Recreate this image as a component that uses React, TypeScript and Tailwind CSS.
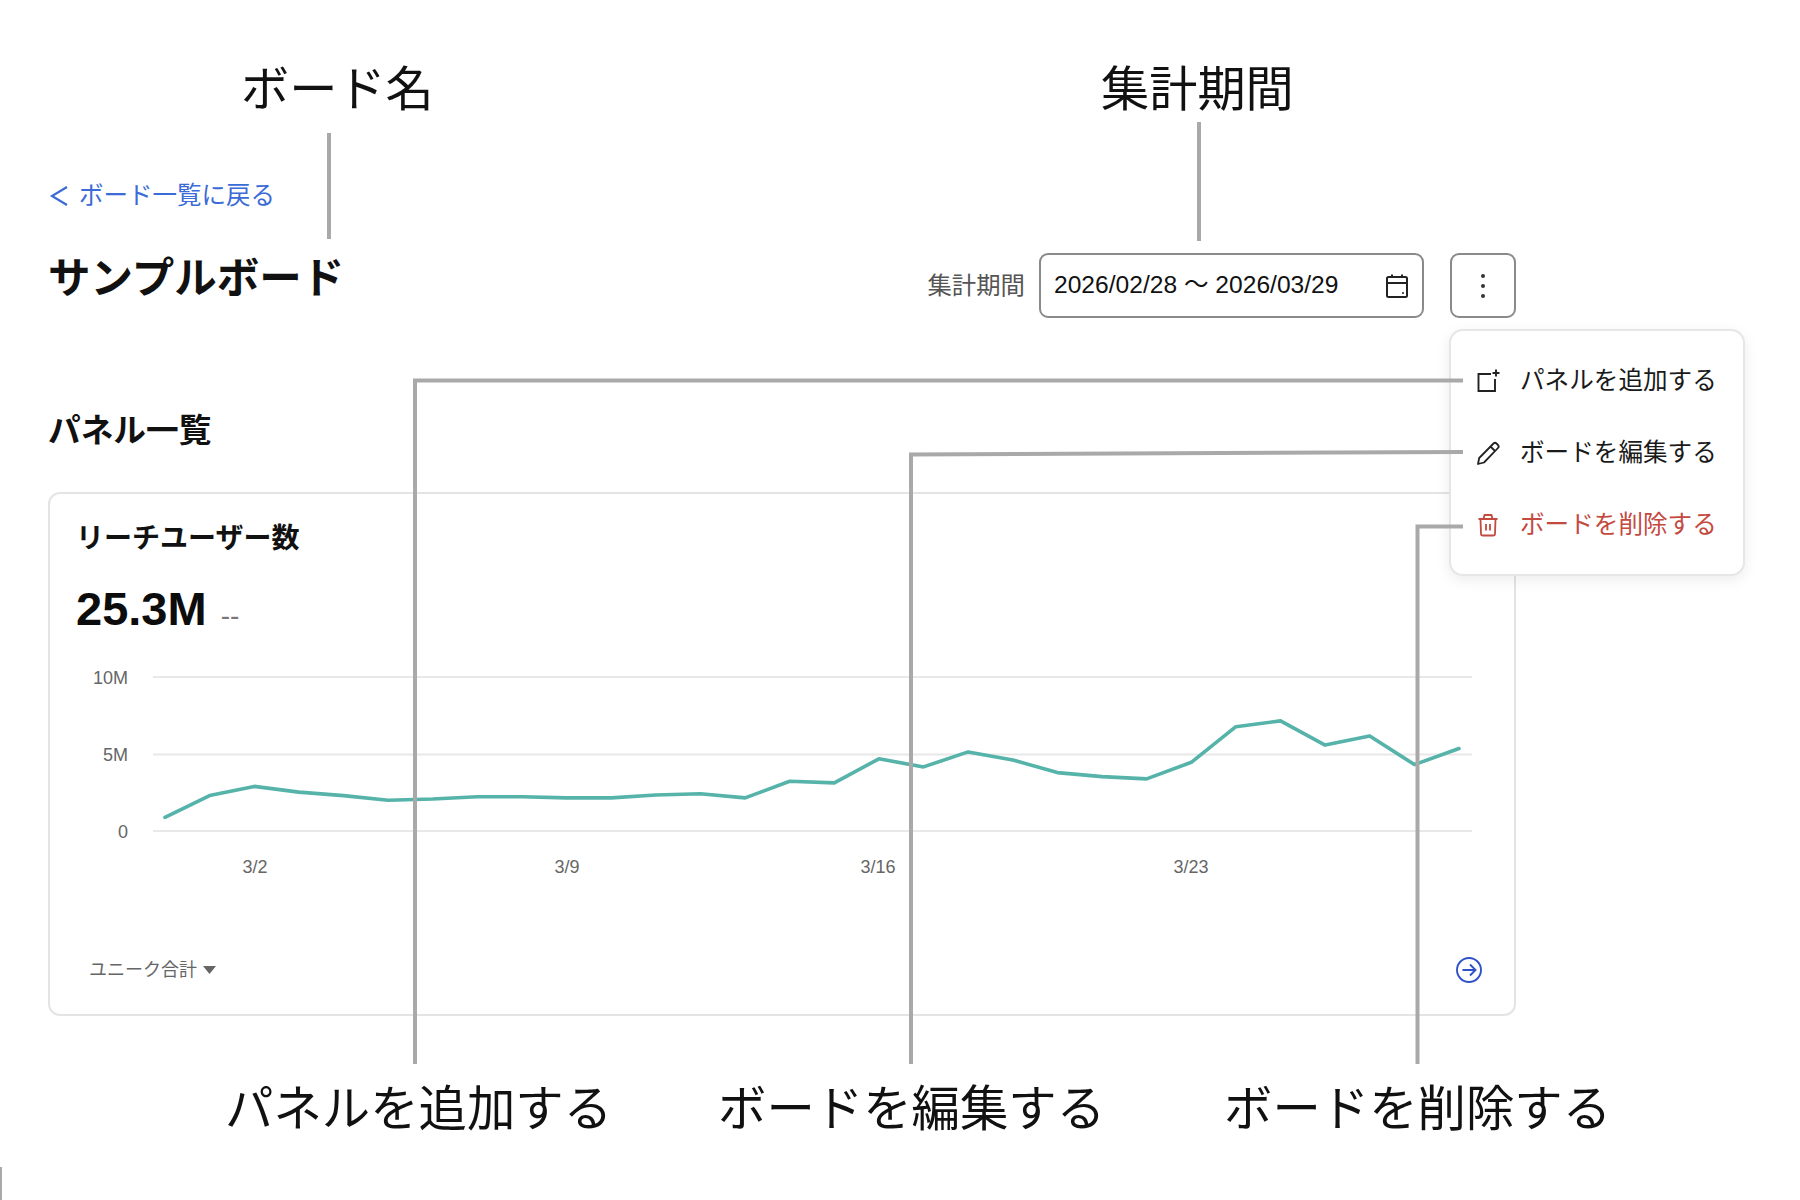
const sans = "font-['Liberation_Sans','Noto_Sans_CJK_JP',sans-serif]";

const raw = [712,693,685,690,693,697,696,694,694,695,695,692.5,691.5,695,680.5,682,661,668,655,662,673,676.5,678.5,664,633,628,649,641,666,652];

function Callout({ className, children }: { className: string; children: string }) {
  return (
    <div className={`absolute whitespace-nowrap text-center leading-none text-[#111] font-normal ${className}`}>{children}</div>
  );
}

function MenuItem({ icon, label, danger }: { icon: React.ReactNode; label: string; danger?: boolean }) {
  return (
    <div className={`flex h-[72px] items-center gap-[19px] pl-[24px] text-[24.6px] ${danger ? "text-[#c4493f]" : "text-[#1a1a1a]"}`}>
      {icon}
      <span className="whitespace-nowrap">{label}</span>
    </div>
  );
}

export default function App() {
  return (
    <div className={`relative h-[1200px] w-[1800px] overflow-hidden bg-white ${sans}`}>
      <div className="ml-12 w-[1468px] pt-[178px]">
        <a className="flex h-[36px] items-center gap-[9px] text-[24.5px] text-[#3a6bd6]">
          <svg width="22" height="24" viewBox="0 0 22 24" fill="none" stroke="currentColor" strokeWidth="2.2"><path d="M19 3 4 12l15 9" /></svg>
          <span>ボード一覧に戻る</span>
        </a>
        <div className="mt-[13px] flex items-start justify-between">
          <h1 className="mt-[25px] text-[42.5px] font-bold leading-[54px] text-[#111]">サンプルボード</h1>
          <div className="mt-[26px] flex items-center">
            <span className="mr-[14px] pt-[1px] text-[24.4px] text-[#555]">集計期間</span>
            <div className="flex h-[65px] w-[385px] items-center justify-between rounded-[9px] border-2 border-[#8a8a8a] pl-[13px] pr-[12px] text-[24.6px] text-[#111]">
              <span className="whitespace-nowrap">2026/02/28 〜 2026/03/29</span>
              <svg width="26" height="26" viewBox="0 0 26 26" fill="none" stroke="#222" strokeWidth="2"><rect x="3" y="4" width="20" height="20" rx="1.5" /><path d="M3 10h20M8 1.5V4M18 1.5V4" /><circle cx="19" cy="20" r="1" fill="#222" stroke="none" /></svg>
            </div>
            <button className="ml-[26px] flex h-[65px] w-[66px] flex-col items-center justify-center gap-[6px] rounded-[9px] border-2 border-[#8a8a8a]">
              <span className="h-[4px] w-[4px] rounded-full bg-[#333]" />
              <span className="h-[4px] w-[4px] rounded-full bg-[#333]" />
              <span className="h-[4px] w-[4px] rounded-full bg-[#333]" />
            </button>
          </div>
        </div>
        <h2 className="mt-[93px] text-[32.7px] font-bold leading-[40px] text-[#111]">パネル一覧</h2>
        <section className="mt-[41px] h-[524px] rounded-[12px] border-2 border-[#e4e4e4] px-[26px] pt-[27px]">
          <h3 className="text-[28px] font-bold leading-[36px] text-[#111]">リーチユーザー数</h3>
          <div className="mt-[27px] flex items-end gap-[14px]">
            <span className="text-[47px] font-bold leading-[50px] text-[#0c0c0c]">25.3M</span>
            <span className="pb-[3px] text-[28px] leading-[30px] text-[#777]">--</span>
          </div>
          <div className="relative mt-[31px] h-[200px] -mx-[26px]">
            <svg className="absolute inset-0" width="1464" height="200" viewBox="50 665 1464 200">
              <g stroke="#e8e8e8" strokeWidth="2">
                <path d="M153 677H1472M153 754.5H1472M153 831H1472" />
              </g>
              <polyline points={raw.map((y, i) => `${(165 + i * 44.62).toFixed(1)},${(y * 1.148).toFixed(1)}`).join(" ")} fill="none" stroke="#55b3a9" strokeWidth="3.6" strokeLinejoin="round" strokeLinecap="round" />
            </svg>
            <div className="absolute left-0 top-0 h-full w-[78px] text-right text-[18px] leading-[22px] text-[#666]">
              <span className="absolute right-0 top-[2px]">10M</span>
              <span className="absolute right-0 top-[79px]">5M</span>
              <span className="absolute right-0 top-[156px]">0</span>
            </div>
            <div className="absolute left-0 top-[191px] text-[18px] leading-[22px] text-[#666]">
              <span className="absolute left-[205px] w-[30px] -translate-x-1/2 whitespace-nowrap text-center">3/2</span>
              <span className="absolute left-[517px] w-[30px] -translate-x-1/2 whitespace-nowrap text-center">3/9</span>
              <span className="absolute left-[828px] w-[40px] -translate-x-1/2 whitespace-nowrap text-center">3/16</span>
              <span className="absolute left-[1141px] w-[40px] -translate-x-1/2 whitespace-nowrap text-center">3/23</span>
            </div>
          </div>
          <div className="mt-[91px] flex items-center justify-between pl-[13px]">
            <div className="flex items-center gap-[6px] text-[18px] text-[#666]">
              <span>ユニーク合計</span>
              <svg width="13" height="8" viewBox="0 0 13 8"><path d="M0 0h13L6.5 8z" fill="#666" /></svg>
            </div>
            <svg width="28" height="28" viewBox="0 0 28 28" fill="none" stroke="#2f52c8" strokeWidth="1.9" className="mr-[5px]"><circle cx="14" cy="14" r="12" /><path d="M7.5 14h13M15 8.5l5.5 5.5-5.5 5.5" /></svg>
          </div>
        </section>
      </div>

      <div className="absolute left-[1449px] top-[329px] h-[247px] w-[296px] rounded-[14px] border-2 border-[#e6e6e6] bg-white pt-[14px] shadow-[0_4px_14px_rgba(0,0,0,0.08)]">
        <MenuItem label="パネルを追加する" icon={<svg width="26" height="26" viewBox="0 0 26 26" fill="none" stroke="#222" strokeWidth="1.9"><path d="M16 6H3.5v17H20V11M21 1.5v7M17.5 5h7" /></svg>} />
        <MenuItem label="ボードを編集する" icon={<svg width="26" height="26" viewBox="0 0 26 26" fill="none" stroke="#222" strokeWidth="1.8" strokeLinejoin="round"><path d="M3 24l1.2-6L18.5 3.5a2.2 2.2 0 0 1 3 0l1.5 1.5a2.2 2.2 0 0 1 0 3L9 22.5zM15.5 6.5l5 5" /></svg>} />
        <MenuItem danger label="ボードを削除する" icon={<svg width="26" height="26" viewBox="0 0 26 26" fill="none" stroke="#c4493f" strokeWidth="1.8" strokeLinejoin="round"><path d="M3.5 7h19M8.5 7l1-4h7l1 4M5.5 7l.5 15a1.5 1.5 0 0 0 1.5 1.5h11a1.5 1.5 0 0 0 1.5-1.5l.5-15M11 12v6.5M15 12v6.5" /></svg>} />
      </div>

      <svg className="pointer-events-none absolute inset-0" width="1800" height="1200" fill="none" stroke="#a9a9a9" strokeWidth="4">
        <path d="M329 133V239M1199 122V241" />
        <path d="M1463 380.5H415V1064" />
        <path d="M1463 452L911 454.5V1064" />
        <path d="M1463 526.5H1417.5V1064" />
        <path d="M1 1167V1200" strokeWidth="2" />
      </svg>

      <Callout className="left-[241px] top-[65px] text-[48.2px]">ボード名</Callout>
      <Callout className="left-[1101px] top-[65px] text-[48.2px]">集計期間</Callout>
      <Callout className="left-[225px] top-[1085px] text-[48.4px]">パネルを追加する</Callout>
      <Callout className="left-[718px] top-[1085px] text-[48.4px]">ボードを編集する</Callout>
      <Callout className="left-[1224px] top-[1085px] text-[48.4px]">ボードを削除する</Callout>
    </div>
  );
}
